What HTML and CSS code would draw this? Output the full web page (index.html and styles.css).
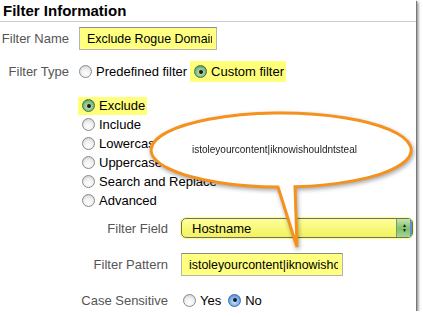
FILE: index.html
```html
<!DOCTYPE html>
<html lang="en">
  <head>
    <meta charset="UTF-8" />
    <meta name="viewport" content="width=device-width, initial-scale=1.0" />
    <title>Filter Information</title>
    <link rel="stylesheet" href="styles.css">
  </head>
  <body>
    <div class="panel">
      <div class="title">Filter Information</div>

      <div class="row name-row">
        <label class="label" for="filter-name">Filter Name</label>
        <input class="field name-field" id="filter-name" type="text" value="Exclude Rogue Domain" readonly />
      </div>

      <div class="row type-row">
        <span class="label">Filter Type</span>
        <span class="radio"></span>
        <span class="radio-text">Predefined filter</span>
        <span class="mark custom">
          <span class="radio on-green"></span>
          <span class="radio-text">Custom filter</span>
        </span>
      </div>

      <ul class="options">
        <li><span class="mark"><span class="radio on-green"></span><span class="radio-text">Exclude</span></span></li>
        <li><span class="radio"></span><span class="radio-text">Include</span></li>
        <li><span class="radio"></span><span class="radio-text">Lowercase</span></li>
        <li><span class="radio"></span><span class="radio-text">Uppercase</span></li>
        <li><span class="radio"></span><span class="radio-text">Search and Replace</span></li>
        <li><span class="radio"></span><span class="radio-text">Advanced</span></li>
      </ul>

      <div class="row wide field-row">
        <span class="label">Filter Field</span>
        <div class="select">
          <span class="select-text">Hostname</span>
          <span class="select-btn"><span>&#9650;</span><span>&#9660;</span></span>
        </div>
      </div>

      <div class="row wide pattern-row">
        <label class="label" for="filter-pattern">Filter Pattern</label>
        <input class="field pattern-field" id="filter-pattern" type="text" value="istoleyourcontent|iknowishouldntsteal" readonly />
      </div>

      <div class="row wide case-row">
        <span class="label">Case Sensitive</span>
        <span class="radio yes"></span>
        <span class="radio-text">Yes</span>
        <span class="radio on-blue no"></span>
        <span class="radio-text">No</span>
      </div>
    </div>

    <svg class="bubble" width="423" height="317" viewBox="0 0 423 317">
      <path d="M295 186.8 L297 247 L278 187 A130 37 0 1 1 295 186.8 Z" />
      <text x="192" y="153">istoleyourcontent|iknowishouldntsteal</text>
    </svg>
  </body>
</html>
```

FILE: styles.css
```css
body {
  margin: 0;
  background: #fff;
  font-family: "Liberation Sans", Arial, sans-serif;
  font-size: 13px;
  color: #000;
}

.panel {
  width: 416px;
  height: 311px;
  background: #fff;
  box-shadow: 1px 1px 0 #777, 2px 2px 3px rgba(0, 0, 0, 0.55);
  overflow: hidden;
}

.title {
  font-size: 15px;
  font-weight: bold;
  line-height: 18px;
  padding: 2px 3px 1px;
  border-bottom: 1px solid #cfcfcf;
}

.row {
  display: flex;
  align-items: center;
}

.label {
  width: 69px;
  margin-right: 10px;
  text-align: right;
  color: #555;
  flex-shrink: 0;
}

.wide .label {
  width: 168px;
  margin-right: 13px;
}

.field {
  box-sizing: border-box;
  height: 23px;
  margin: 0;
  padding: 0 4px 0 7px;
  border: 1px solid #b4b4b4;
  border-top-color: #8c8c8c;
  background: #ffff80;
  font-family: "Liberation Sans", Arial, sans-serif;
  font-size: 12.4px;
  color: #000;
  outline: none;
}

.name-row {
  margin-top: 5px;
  height: 23px;
}

.name-field {
  width: 138px;
}

.type-row {
  margin-top: 11px;
  height: 21px;
}

.type-row .radio:first-of-type {
  margin-left: 1px;
}

.radio {
  display: inline-block;
  box-sizing: border-box;
  width: 13px;
  height: 13px;
  border-radius: 50%;
  border: 1px solid #8a8a8a;
  background: radial-gradient(circle at 50% 70%, #fff 0%, #f1f1f1 45%, #c9c9c9 100%);
  flex-shrink: 0;
  position: relative;
}

.on-green {
  border-color: #4d6a52;
  background: radial-gradient(circle at 50% 60%, #c8ecc4 0%, #7fbf82 55%, #3f7a4a 100%);
}

.on-blue {
  border-color: #3d6aa8;
  background: radial-gradient(circle at 50% 60%, #d4e8ff 0%, #79acea 55%, #3a71c1 100%);
}

.on-green::after,
.on-blue::after {
  content: "";
  position: absolute;
  left: 3.5px;
  top: 3.5px;
  width: 4px;
  height: 4px;
  border-radius: 50%;
  background: #1a1a1a;
}

.radio-text {
  margin-left: 4px;
}

.mark {
  display: inline-flex;
  align-items: center;
  background: #ffff7a;
}

.custom {
  height: 21px;
  margin-left: 3px;
  padding: 0 2px 0 3px;
}

.options {
  list-style: none;
  margin: 14px 0 0;
  padding: 0 0 0 78px;
}

.options li {
  display: flex;
  align-items: center;
  height: 19px;
  padding-left: 4px;
}

.options li:first-child {
  padding-left: 0;
}

.options .mark {
  height: 18px;
  padding: 0 2px 0 4px;
}

.field-row {
  margin-top: 8px;
  height: 20px;
}

.select {
  box-sizing: border-box;
  display: flex;
  align-items: center;
  width: 232px;
  height: 20px;
  border: 1px solid #6f6f6f;
  border-radius: 5px;
  background: linear-gradient(#ffff9a, #f2f25e);
  box-shadow: 0 0 0 1px #ffff80;
  overflow: hidden;
}

.select-text {
  flex: 1;
  padding-left: 10px;
}

.select-btn {
  display: flex;
  flex-direction: column;
  align-items: center;
  justify-content: center;
  width: 15px;
  height: 100%;
  border-left: 1px solid #7a9a6a;
  background: linear-gradient(#c4e8a8, #7fbf6c 55%, #a4d890);
  box-shadow: inset -2px 0 0 #5b8fd6;
  font-size: 5px;
  line-height: 5px;
  color: #111;
}

.pattern-row {
  margin-top: 15px;
  height: 23px;
}

.pattern-field {
  width: 162px;
}

.case-row {
  margin-top: 15px;
  height: 18px;
}

.case-row .yes {
  margin-left: 2px;
}

.case-row .no {
  margin-left: 7px;
}

.bubble {
  position: absolute;
  top: 0;
  left: 0;
  filter: drop-shadow(1px 2px 2px rgba(0, 0, 0, 0.35));
}

.bubble path {
  fill: #fff;
  stroke: #f5921e;
  stroke-width: 3;
  stroke-linejoin: miter;
}

.bubble text {
  font-family: "Liberation Sans", Arial, sans-serif;
  font-size: 10px;
  fill: #222;
}
```
